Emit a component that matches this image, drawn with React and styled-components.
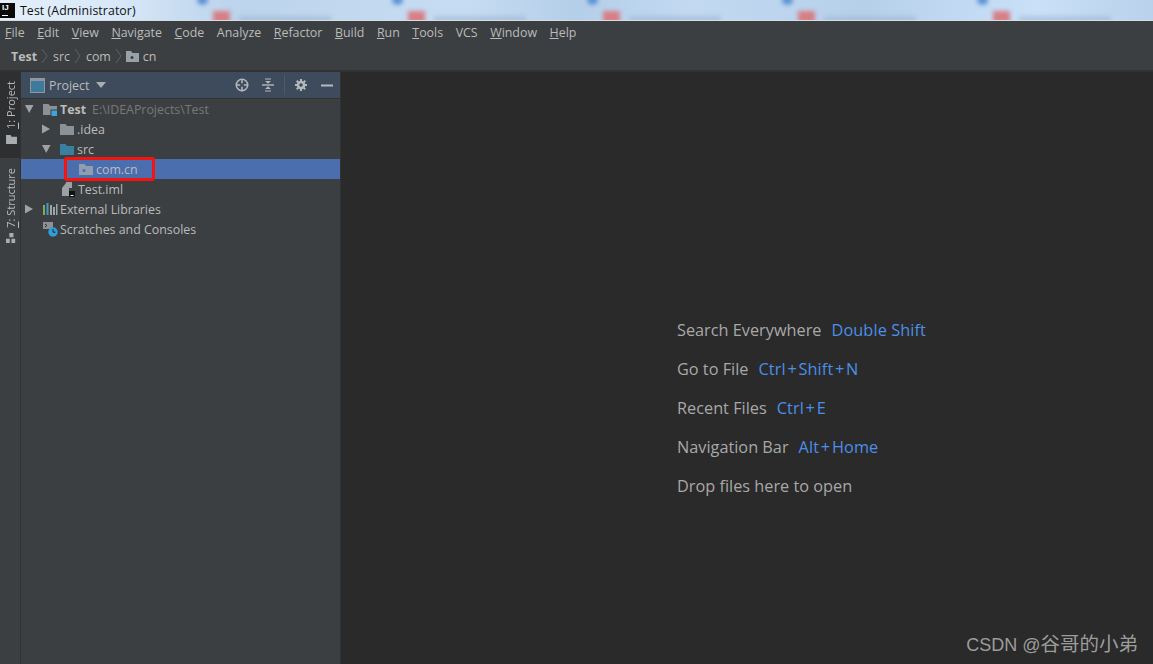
import React from "react";
import styled, { createGlobalStyle } from "styled-components";

const Global = createGlobalStyle`
  html, body { margin: 0; padding: 0; height: 100%; background: #2b2b2b; overflow: hidden; }
  #root { height: 664px; width: 1153px; }
`;
const uiFont = `"Open Sans", "Noto Sans", "Liberation Sans", sans-serif`;

const Page = styled.div`
  width: 1153px; height: 664px; display: flex; flex-direction: column;
  font-family: ${uiFont}; position: relative; overflow: hidden; background: #3c3f41;
`;
const TitleBar = styled.div`
  height: 20px; flex: none; position: relative; display: flex; align-items: center;
  background: linear-gradient(90deg, #e4eff9 0%, #d8e8f8 10%, #bcd4ec 20%, #c6dcf2 40%, #b5cfe9 50%, #c2d9f1 60%, #b7d0ea 75%, #c9e0f8 90%, #b9d1ea 100%);
  overflow: hidden; border-bottom: 1px solid #d5dde3;
`;
const Blur = styled.div`
  position: absolute; inset: 0; display: flex; padding-left: 203px; filter: blur(2px);
`;
const Tile = styled.div`
  width: 195px; flex: none; position: relative;
`;
const Dot = styled.div`
  position: absolute; left: -6px; top: -5px; width: 11px; height: 10px; border-radius: 50%; background: #5d93d6;
`;
const Pink = styled.div`
  position: absolute; left: 10px; top: 11px; width: 17px; height: 12px; background: #d77f85;
`;
const Smear = styled.div`
  position: absolute; left: 36px; top: 16px; width: 92px; height: 7px; background: #9db5cf; opacity: .55;
`;
const AppIcon = styled.div`
  width: 15px; height: 15px; background: #0b0b0b; color: #fff; position: relative;
  font: 700 8px/10px "Liberation Sans", sans-serif; padding-left: 2px; box-sizing: border-box;
  &::after { content: ""; position: absolute; left: 2px; bottom: 2px; width: 6px; height: 1px; background: #fff; }
`;
const TitleText = styled.span`
  position: relative; margin-left: 5px; font-size: 12.3px; color: #111; letter-spacing: .1px;
`;
const MenuBar = styled.div`
  height: 23px; flex: none; display: flex; align-items: center; padding-left: 5px; gap: 12.55px;
  background: #3c3f41; box-sizing: border-box; font-size: 12.4px; color: #bbbbbb;
`;
const MenuItem = styled.span`
  & u { text-underline-offset: 1px; }
`;
const NavBar = styled.div`
  height: 27px; flex: none; display: flex; align-items: center; padding: 0 0 2px 11px;
  background: #3c3f41; font-size: 12.4px; color: #bbbbbb; border-bottom: 1px solid #323232; box-sizing: border-box;
`;
const Crumb = styled.span`
  font-weight: ${p => (p.$bold ? 700 : 400)};
`;
const Sep = styled.svg`
  width: 16px; height: 20px; flex: none;
`;
const CrumbIcon = styled.svg`
  flex: none; margin-left: -2px; margin-right: 3px;
`;
const Body = styled.div`
  flex: 1; display: flex; min-height: 0; padding-top: 1px; background: #323232;
`;
const Stripe = styled.div`
  width: 20px; flex: none; background: #3c3f41; display: flex; flex-direction: column; border-right: 1px solid #323232;
`;
const StripeTab = styled.div`
  height: ${p => p.$h}px; box-sizing: border-box; display: flex; flex-direction: column; align-items: center;
  padding-top: ${p => p.$pt}px; gap: 5px; background: ${p => (p.$active ? "#2d2f30" : "transparent")};
  color: #bbbbbb;
`;
const VText = styled.span`
  writing-mode: vertical-rl; transform: rotate(180deg); font-size: 11px; line-height: 16px; white-space: nowrap;
  margin-left: 2px;
  & u { text-underline-offset: 1px; }
`;
const StripeIcon = styled.svg`
  flex: none; display: block; margin-left: 2px;
`;
const Panel = styled.div`
  width: 319px; flex: none; background: #3c3f41; display: flex; flex-direction: column; border-right: 1px solid #323232;
`;
const PanelHead = styled.div`
  height: 26px; flex: none; background: #3d4b5c; display: flex; align-items: center; padding-left: 9px;
  border-bottom: 1px solid #323232; color: #bbbbbb; font-size: 12.4px;
`;
const HeadLabel = styled.span`
  margin-left: 4px;
`;
const HeadIcon = styled.svg`
  flex: none; display: block;
`;
const Caret = styled(HeadIcon)`
  margin-left: 7px;
`;
const Spacer = styled.div`
  flex: 1;
`;
const HeadTools = styled.div`
  display: flex; align-items: center; padding-right: 7px;
`;
const ToolIcon = styled.svg`
  flex: none; display: block; margin-right: ${p => p.$mr}px;
`;
const VDivider = styled.div`
  width: 1px; height: 20px; background: #4f5a66; margin: 0 10px 0 10px;
`;
const Tree = styled.div`
  display: flex; flex-direction: column;
`;
const Row = styled.div`
  height: 20px; display: flex; align-items: center; position: relative; flex: none;
  padding-left: ${p => p.$indent}px; font-size: 12.4px; color: #bbbbbb; white-space: nowrap;
  background: ${p => (p.$sel ? "#4b6eaf" : "transparent")};
`;
const Arrow = styled.svg`
  width: 12px; height: 12px; flex: none; margin-right: 6px;
`;
const RowIcon = styled.svg`
  width: 16px; height: 16px; flex: none; margin-right: 2px;
`;
const Bold = styled.b`
  font-weight: 700;
`;
const Hint = styled.span`
  color: #787878; margin-left: 6px;
`;
const RedBox = styled.div`
  position: absolute; left: 43px; top: -2px; width: 91px; height: 24px; box-sizing: border-box;
  border: 3px solid #f5140f; border-radius: 3px;
`;
const Editor = styled.div`
  flex: 1; background: #2a2a2a; display: flex; flex-direction: column; gap: 15.3px; padding: 247px 0 0 336px;
  font-size: 16.3px; line-height: 23.7px; color: #a8a8a8;
`;
const HelpLine = styled.div`
  display: flex; gap: 10px; white-space: nowrap;
`;
const Key = styled.span`
  color: #4b8fe8; letter-spacing: .1px;
`;
const Plus = styled.span`
  margin: 0 1.7px;
`;
const Watermark = styled.div`
  position: absolute; right: 15px; bottom: 7px; color: #9c9c9c; font-size: 18px; line-height: 24px;
  font-family: "Liberation Sans", "Noto Sans CJK SC", sans-serif;
`;
const Cjk = styled.span`
  font-size: 19.5px;
`;

const Folder = ({ c = "#8a9297", dot }) => (
  <RowIcon viewBox="0 0 16 16">
    <path d="M1 3h5.500l1.500 2h7v9H1z" fill={c} />
    {dot ? <circle cx="6" cy="9.500" r="1.600" fill={dot} /> : null}
  </RowIcon>
);

const Tri = ({ open }) => (
  <Arrow viewBox="0 0 12 12">
    {open ? <path d="M1 2h8.500L5.200 10z" fill="#9ea2a6" /> : <path d="M1 1.500l8 4.500-8 4.500z" fill="#9ea2a6" />}
  </Arrow>
);

const menu = [["F","ile"],["E","dit"],["V","iew"],["N","avigate"],["C","ode"],["","Analyze"],["R","efactor"],["B","uild"],["R","un"],["T","ools"],["","VCS"],["W","indow"],["H","elp"]];

const Chevron = () => (
  <Sep viewBox="0 0 16 20"><path d="M5 3l5 7-5 7" fill="none" stroke="#5e6163" strokeWidth="1" /></Sep>
);

export default function App() {
  return (
    <Page>
      <Global />
      <TitleBar>
        <Blur>
          {[0, 1, 2, 3, 4].map(i => (
            <Tile key={i}><Dot /><Pink /><Smear /></Tile>
          ))}
        </Blur>
        <AppIcon>IJ</AppIcon>
        <TitleText>Test (Administrator)</TitleText>
      </TitleBar>
      <MenuBar>
        {menu.map(([a, b], i) => (
          <MenuItem key={i}>{a ? <u>{a}</u> : null}{b}</MenuItem>
        ))}
      </MenuBar>
      <NavBar>
        <Crumb $bold>Test</Crumb><Chevron />
        <Crumb>src</Crumb><Chevron />
        <Crumb>com</Crumb><Chevron />
        <CrumbIcon width="15" height="13" viewBox="0 0 15 13">
          <path d="M1 1h5l1.500 2H14v9H1z" fill="#9aa1a6" /><circle cx="7" cy="7.500" r="1.500" fill="#3c3f41" />
        </CrumbIcon>
        <Crumb>cn</Crumb>
      </NavBar>
      <Body>
        <Stripe>
          <StripeTab $active $h={86} $pt={9}>
            <VText><u>1</u>: Project</VText>
            <StripeIcon width="11" height="10" viewBox="0 0 12 11"><path d="M0 1h5l1 2h6v8H0z" fill="#a9adb0" /></StripeIcon>
          </StripeTab>
          <StripeTab $h={90} $pt={10}>
            <VText><u>7</u>: Structure</VText>
            <StripeIcon width="10" height="10" viewBox="0 0 12 12">
              <path d="M4 0h5v5H4zM0 7h4.500v5H0zM6.500 7H11v5H6.500z" fill="#a9adb0" />
            </StripeIcon>
          </StripeTab>
        </Stripe>
        <Panel>
          <PanelHead>
            <HeadIcon width="15" height="15" viewBox="0 0 15 15">
              <rect x=".5" y=".5" width="14" height="14" fill="#3d7a9c" stroke="#8f979e" />
              <rect x="1" y="1" width="13" height="2" fill="#8f979e" />
            </HeadIcon>
            <HeadLabel>Project</HeadLabel>
            <Caret width="10" height="6" viewBox="0 0 10 6">
              <path d="M0 0h10L5 6z" fill="#a9adb0" />
            </Caret>
            <Spacer />
            <HeadTools>
              <ToolIcon $mr={13} width="14" height="14" viewBox="0 0 16 16">
                <circle cx="8" cy="8" r="6.500" fill="none" stroke="#b4b8bb" strokeWidth="1.800" />
                <path d="M8 1v5M8 10v5M1 8h5M10 8h5" stroke="#b4b8bb" strokeWidth="1.800" />
              </ToolIcon>
              <ToolIcon $mr={0} width="12" height="14" viewBox="0 0 12 14">
                <path d="M0 7h12" stroke="#b4b8bb" strokeWidth="1.400" />
                <path d="M3 3h6L6 5.800zM3 11h6L6 8.200z" fill="#b4b8bb" />
                <path d="M3 1h6M3 13h6" stroke="#b4b8bb" strokeWidth="1.200" />
              </ToolIcon>
              <VDivider />
              <ToolIcon $mr={14} width="12" height="12" viewBox="0 0 14 14">
                <circle cx="7" cy="7" r="3.600" fill="none" stroke="#b4b8bb" strokeWidth="3" />
                <path d="M7 0v14M0 7h14M2 2l10 10M12 2L2 12" stroke="#b4b8bb" strokeWidth="2.400" strokeDasharray="2.400 9.200" />
              </ToolIcon>
              <ToolIcon $mr={0} width="12" height="3" viewBox="0 0 12 3"><rect width="12" height="2" y=".5" fill="#b4b8bb" /></ToolIcon>
            </HeadTools>
          </PanelHead>
          <Tree>
            <Row $indent={3}>
              <Tri open />
              <RowIcon viewBox="0 0 16 16">
                <path d="M1 3h5.500l1.500 2h7v9H1z" fill="#8a9297" />
                <rect x="9" y="9" width="6.500" height="6.500" fill="#3aa4dc" stroke="#3c3f41" />
              </RowIcon>
              <Bold>Test</Bold><Hint>E:\IDEAProjects\Test</Hint>
            </Row>
            <Row $indent={20}><Tri /><Folder /><span>.idea</span></Row>
            <Row $indent={20}><Tri open /><Folder c="#3b7f9e" /><span>src</span></Row>
            <Row $indent={57} $sel>
              <Folder c="#8f9dae" dot="#4b6eaf" /><span>com.cn</span>
              <RedBox />
            </Row>
            <Row $indent={39}>
              <RowIcon viewBox="0 0 16 16">
                <path d="M2 7l4-5h3v13H2z" fill="#9aa0a4" />
                <path d="M6 1h6v6H9V4H6z" fill="#9aa0a4" />
                <rect x="9" y="10" width="6" height="6" fill="#111" /><rect x="10.500" y="14" width="3" height="1" fill="#fff" />
              </RowIcon>
              <span>Test.iml</span>
            </Row>
            <Row $indent={3}>
              <Tri />
              <RowIcon viewBox="0 0 16 16">
                <path d="M1 4h2v10H1z" fill="#7eaa5a" /><path d="M4.500 2h2v12h-2z" fill="#3f9bc8" />
                <path d="M8 4h2v10H8z" fill="#9ea3a6" /><path d="M11 6h2v8h-2zM14 3h1.500v11H14z" fill="#9ea3a6" />
              </RowIcon>
              <span>External Libraries</span>
            </Row>
            <Row $indent={21}>
              <RowIcon viewBox="0 0 16 16">
                <path d="M1 1h10v7H1z" fill="#8a9297" /><path d="M3 3l2 1.500L3 6" stroke="#333" fill="none" />
                <circle cx="11" cy="11" r="4.700" fill="#2f9edb" /><path d="M11 8v3.200h2.500" stroke="#222" fill="none" />
              </RowIcon>
              <span>Scratches and Consoles</span>
            </Row>
          </Tree>
        </Panel>
        <Editor>
          <HelpLine>Search Everywhere<Key>Double Shift</Key></HelpLine>
          <HelpLine>Go to File<Key>Ctrl<Plus>+</Plus>Shift<Plus>+</Plus>N</Key></HelpLine>
          <HelpLine>Recent Files<Key>Ctrl<Plus>+</Plus>E</Key></HelpLine>
          <HelpLine>Navigation Bar<Key>Alt<Plus>+</Plus>Home</Key></HelpLine>
          <HelpLine>Drop files here to open</HelpLine>
        </Editor>
      </Body>
      <Watermark>CSDN @<Cjk>谷哥的小弟</Cjk></Watermark>
    </Page>
  );
}
